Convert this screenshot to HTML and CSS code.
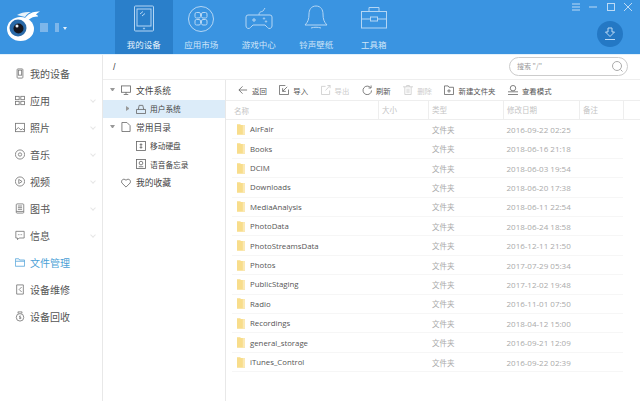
FILE: index.html
```html
<!DOCTYPE html>
<html lang="zh">
<head>
<meta charset="utf-8">
<title>文件管理</title>
<link rel="stylesheet" href="styles.css">
</head>
<body>
<svg class="defs" width="0" height="0" aria-hidden="true">
  <symbol id="folder" viewBox="0 0 9 12"><path d="M0 0h3.500l1 1H9v11H0z" fill="#f8dd8b"/><path d="M6.500 1H9v11H6.500z" fill="#fbe9b4"/></symbol>
</svg>
<div class="app">
  <header class="top">
    <div class="brand">
      <svg class="logo" width="40" height="54" viewBox="0 0 40 54">
        <path d="M25 18c3-4 8-7 15-6.500-2 1-3 2-4 3 1 .5 2 1 2 2-4 0-7 1-9.500 3.500z" fill="#fff"/>
        <path d="M17 15c4-2.500 9-3.500 14-3-2.500 1-4.500 2.500-6 5z" fill="#e9f3fb"/>
        <ellipse cx="20.500" cy="29" rx="13.500" ry="12" fill="#fff"/>
        <circle cx="18" cy="28" r="8.500" fill="#2a6aa8"/>
        <circle cx="18.500" cy="28.500" r="5" fill="#14161f"/>
        <circle cx="17" cy="26" r="1.500" fill="#eef4fa"/>
      </svg>
      <span class="blur-a"></span><span class="blur-b"></span><span class="caret"></span>
    </div>
    <nav class="tabs">
      <a class="tab active">
        <svg width="24" height="28" viewBox="0 0 24 28" class="ic"><rect x="2.500" y="1" width="19" height="25" rx="1"/><rect x="5" y="4" width="14" height="17"/><path d="M8 9l3-2.500M10 11l3-2.500"/><circle cx="12" cy="23.500" r=".6"/></svg>
        <span>我的设备</span></a>
      <a class="tab">
        <svg width="28" height="28" viewBox="0 0 28 28" class="ic"><circle cx="14" cy="14" r="12.500"/><rect x="8" y="7.500" width="5.500" height="5.500" rx="1.500"/><rect x="14.500" y="7.500" width="5.500" height="5.500" rx="1.500"/><rect x="8" y="14.500" width="5.500" height="5.500" rx="1.500"/><rect x="14.500" y="14.500" width="5.500" height="5.500" rx="1.500"/></svg>
        <span>应用市场</span></a>
      <a class="tab">
        <svg width="28" height="28" viewBox="0 0 28 28" class="ic"><path d="M3 10h22a2 2 0 0 1 2 2v9a2.500 2.500 0 0 1-4.500 1.500L20 20H8l-2.500 2.500A2.500 2.500 0 0 1 1 21v-9a2 2 0 0 1 2-2z"/><path d="M14 10C14 6 17 7 18 6s1-2 2-3"/><path d="M7 15h4M9 13v4"/><circle cx="19" cy="13.500" r=".7"/><circle cx="21" cy="16.500" r=".7"/></svg>
        <span>游戏中心</span></a>
      <a class="tab">
        <svg width="28" height="28" viewBox="0 0 28 28" class="ic"><path d="M14 1c-5 0-7 4-7 8 0 5-1 8-4 11h22c-3-3-4-6-4-11 0-4-2-8-7-8z"/><path d="M9 23c3-1 7-1 10 0"/></svg>
        <span>铃声壁纸</span></a>
      <a class="tab">
        <svg width="28" height="28" viewBox="0 0 28 28" class="ic"><rect x="1.500" y="6.500" width="25" height="16.500"/><path d="M9 6.500V2.500h10v4M1.500 14h9M17.500 14h9"/><rect x="10.500" y="12" width="7" height="4"/></svg>
        <span>工具箱</span></a>
    </nav>
    <div class="win">
      <svg width="8" height="8" viewBox="0 0 8 8" class="wi"><path d="M0 1h8M0 4h8M0 7h8"/></svg>
      <svg width="8" height="8" viewBox="0 0 8 8" class="wi"><path d="M0 4h8"/></svg>
      <svg width="8" height="8" viewBox="0 0 8 8" class="wi"><rect x=".5" y=".5" width="7" height="7"/></svg>
      <svg width="8" height="8" viewBox="0 0 8 8" class="wi"><path d="M0 0l8 8M8 0L0 8"/></svg>
    </div>
    <div class="dl">
      <svg width="12" height="14" viewBox="0 0 12 14" class="wi"><path d="M4 1h4v4h2.500L6 9.500 1.500 5H4zM1 12.500h10"/></svg>
    </div>
  </header>
  <div class="body">
    <aside class="side">
      <div class="nav-item"><svg class="si" viewBox="0 0 12 12"><rect x="2.500" y=".5" width="7" height="11" rx="1"/><rect x="4" y="2" width="4" height="6"/></svg><span class="nl">我的设备</span></div>
      <div class="nav-item"><svg class="si" viewBox="0 0 12 12"><rect x=".5" y="1" width="4.500" height="4"/><rect x="7" y="1" width="4.500" height="4"/><rect x=".5" y="7" width="4.500" height="4"/><rect x="7" y="7" width="4.500" height="4"/></svg><span class="nl">应用</span><i class="chev"></i></div>
      <div class="nav-item"><svg class="si" viewBox="0 0 12 12"><rect x=".5" y="1" width="11" height="10"/><path d="M1 9l3-3 3 3 2-1.500 2 1.500"/></svg><span class="nl">照片</span><i class="chev"></i></div>
      <div class="nav-item"><svg class="si" viewBox="0 0 12 12"><circle cx="6" cy="6" r="5.500"/><circle cx="6" cy="6" r="2"/></svg><span class="nl">音乐</span><i class="chev"></i></div>
      <div class="nav-item"><svg class="si" viewBox="0 0 12 12"><circle cx="6" cy="6" r="5.500"/><path d="M4.500 3.500l4 2.500-4 2.500z"/></svg><span class="nl">视频</span><i class="chev"></i></div>
      <div class="nav-item"><svg class="si" viewBox="0 0 12 12"><rect x="1.500" y=".5" width="9" height="11" rx="1"/><path d="M3.500 3h5M3.500 5h5M3.500 7h5M1.500 9.500h9"/></svg><span class="nl">图书</span><i class="chev"></i></div>
      <div class="nav-item"><svg class="si" viewBox="0 0 12 12"><path d="M1 1h10v8H5l-2 2V9H1z"/><path d="M3.500 5h1M5.500 5h1M7.500 5h1"/></svg><span class="nl">信息</span><i class="chev"></i></div>
      <div class="nav-item on"><svg class="si" viewBox="0 0 12 12"><path d="M.5 1.500h4l1 1.500h6v7.500H.5zM.5 4.500h11"/></svg><span class="nl">文件管理</span></div>
      <div class="nav-item"><svg class="si" viewBox="0 0 12 12"><path d="M2 .5h8v11H2z"/><path d="M8 3L5 6l3 3"/></svg><span class="nl">设备维修</span></div>
      <div class="nav-item"><svg class="si" viewBox="0 0 12 12"><circle cx="6" cy="7" r="4.500"/><path d="M4 2.500L3.500.5h5L8 2.500M7 5.500H5.500v1.500H7v1.500H5"/></svg><span class="nl">设备回收</span></div>
    </aside>
    <main class="main">
      <div class="pathbar">
        <span class="path">/</span>
        <div class="search"><span>搜索 "/"</span><svg width="11" height="11" viewBox="0 0 11 11" class="gi"><circle cx="5" cy="5" r="4.500"/><path d="M8.500 8.500l2 2"/></svg></div>
      </div>
      <div class="panes">
        <div class="tree">
          <div class="tr"><i class="tri down"></i><svg class="ti" viewBox="0 0 11 11"><rect x=".5" y="1" width="10" height="7"/><path d="M5.500 8v2M3 10.500h5"/></svg><span>文件系统</span></div>
          <div class="tr sel lv"><i class="tri right"></i><svg class="ti" viewBox="0 0 11 11"><path d="M.5 6h10v4.500H.5zM2.500 6l1-4.500h4l1 4.500"/></svg><span>用户系统</span></div>
          <div class="tr"><i class="tri down"></i><svg class="ti" viewBox="0 0 11 11"><path d="M1 .5h5.500l3.500 3.500v6.500H1z"/></svg><span>常用目录</span></div>
          <div class="tr lv"><i class="tri none"></i><svg class="ti" viewBox="0 0 11 11"><rect x=".5" y=".5" width="10" height="10"/><path d="M5.500 2.500v6M4 4h3M4 7h3"/></svg><span>移动硬盘</span></div>
          <div class="tr lv"><i class="tri none"></i><svg class="ti" viewBox="0 0 11 11"><rect x=".5" y=".5" width="10" height="10"/><circle cx="5.500" cy="4.500" r="2"/><path d="M3 8.500h5"/></svg><span>语音备忘录</span></div>
          <div class="tr"><i class="tri none"></i><svg class="ti" viewBox="0 0 11 11"><path d="M5.500 10L1 5.500C-.5 3 2.500-.5 5.500 2.500 8.500-.5 11.500 3 10 5.500z"/></svg><span>我的收藏</span></div>
        </div>
        <div class="files">
          <div class="toolbar">
            <span class="tb"><svg class="bi" viewBox="0 0 11 11"><path d="M10 5.500H1M5 1.500l-4 4 4 4"/></svg>返回</span>
            <span class="tb"><svg class="bi" viewBox="0 0 11 11"><path d="M7 .5H.5v10h10V5M9 2L4 7M4 3.500V7h3.500"/></svg>导入</span>
            <span class="tb dis"><svg class="bi" viewBox="0 0 11 11"><path d="M5 1.500H.5v9h9V6M5 6l5-5.500M7 .5h3v3"/></svg>导出</span>
            <span class="tb"><svg class="bi" viewBox="0 0 11 11"><path d="M9.500 3A4.700 4.700 0 1 0 10.500 6M10 .5V3.300H7.200"/></svg>刷新</span>
            <span class="tb dis"><svg class="bi" viewBox="0 0 11 11"><path d="M0 2h11M2 2v8.500h7V2M4 2V.5h3V2M4.500 4v5M6.500 4v5"/></svg>删除</span>
            <span class="tb"><svg class="bi" viewBox="0 0 11 11"><path d="M.5 1h4l1 1.500h5v8h-10zM5.500 4.500v4M3.500 6.500h4"/></svg>新建文件夹</span>
            <span class="tb"><svg class="bi" viewBox="0 0 11 11"><circle cx="5.500" cy="3.500" r="3"/><path d="M0 7.500h11M0 10.500h11"/></svg>查看模式</span>
          </div>
          <div class="thead"><span>名称</span><span class="bl">大小</span><span class="bl">类型</span><span class="bl">修改日期</span><span class="bl">备注</span><span class="bl"></span></div>
          <div class="rows">
            <div class="row"><span class="nm"><svg class="fi"><use href="#folder"/></svg>AirFair</span><span class="ty">文件夹</span><span class="dt">2016-09-22 02:25</span></div>
            <div class="row"><span class="nm"><svg class="fi"><use href="#folder"/></svg>Books</span><span class="ty">文件夹</span><span class="dt">2018-06-16 21:18</span></div>
            <div class="row"><span class="nm"><svg class="fi"><use href="#folder"/></svg>DCIM</span><span class="ty">文件夹</span><span class="dt">2018-06-03 19:54</span></div>
            <div class="row"><span class="nm"><svg class="fi"><use href="#folder"/></svg>Downloads</span><span class="ty">文件夹</span><span class="dt">2018-06-20 17:38</span></div>
            <div class="row"><span class="nm"><svg class="fi"><use href="#folder"/></svg>MediaAnalysis</span><span class="ty">文件夹</span><span class="dt">2018-06-11 22:54</span></div>
            <div class="row"><span class="nm"><svg class="fi"><use href="#folder"/></svg>PhotoData</span><span class="ty">文件夹</span><span class="dt">2018-06-24 18:58</span></div>
            <div class="row"><span class="nm"><svg class="fi"><use href="#folder"/></svg>PhotoStreamsData</span><span class="ty">文件夹</span><span class="dt">2016-12-11 21:50</span></div>
            <div class="row"><span class="nm"><svg class="fi"><use href="#folder"/></svg>Photos</span><span class="ty">文件夹</span><span class="dt">2017-07-29 05:34</span></div>
            <div class="row"><span class="nm"><svg class="fi"><use href="#folder"/></svg>PublicStaging</span><span class="ty">文件夹</span><span class="dt">2017-12-02 19:48</span></div>
            <div class="row"><span class="nm"><svg class="fi"><use href="#folder"/></svg>Radio</span><span class="ty">文件夹</span><span class="dt">2016-11-01 07:50</span></div>
            <div class="row"><span class="nm"><svg class="fi"><use href="#folder"/></svg>Recordings</span><span class="ty">文件夹</span><span class="dt">2018-04-12 15:00</span></div>
            <div class="row"><span class="nm"><svg class="fi"><use href="#folder"/></svg>general_storage</span><span class="ty">文件夹</span><span class="dt">2016-09-21 12:09</span></div>
            <div class="row"><span class="nm"><svg class="fi"><use href="#folder"/></svg>iTunes_Control</span><span class="ty">文件夹</span><span class="dt">2016-09-22 02:39</span></div>
          </div>
        </div>
      </div>
    </main>
  </div>
</div>
</body>
</html>
```

FILE: styles.css
```css
* { box-sizing: border-box; }
html, body { margin: 0; padding: 0; }
body {
  width: 640px;
  height: 401px;
  overflow: hidden;
  background: #fff;
  font-family: "Noto Sans CJK SC", "Liberation Sans", sans-serif;
  color: #555;
}
.defs { position: absolute; }
.app { width: 640px; height: 401px; display: flex; flex-direction: column; }
.top {
  height: 54px;
  flex: none;
  background: #3a94e1;
  display: flex;
  position: relative;
}
.brand { width: 115px; display: flex; align-items: center; }
.logo { flex: none; }
.blur-a { width: 8px; height: 9px; background: #7db6ea; }
.blur-b { width: 4px; height: 9px; background: #7db6ea; margin-left: 7px; }
.caret { width: 0; height: 0; border: 2.500px solid transparent; border-top: 3px solid #e4f0fb; margin: 4px 0 0 4px; }
.tabs { display: flex; }
.tab {
  width: 57.500px;
  height: 54px;
  display: flex;
  flex-direction: column;
  align-items: center;
  padding-top: 5px;
  color: #cfe5f8;
  font-size: 8.500px;
  line-height: 12px;
}
.tab svg { height: 28px; margin-bottom: 5px; flex: none; }
.tab.active { background: #2a7fca; color: #e6f2fc; }
.ic { fill: none; stroke: #b4d6f4; stroke-width: 1; }
.win {
  position: absolute;
  top: 3px;
  right: 8px;
  display: flex;
  gap: 9.500px;
}
.wi { fill: none; stroke: #bcdaf5; stroke-width: 1; flex: none; }
.dl {
  position: absolute;
  left: 597px;
  top: 21px;
  width: 26px;
  height: 26px;
  border-radius: 50%;
  background: #2478c4;
  display: flex;
  align-items: center;
  justify-content: center;
}
.body { flex: 1; display: flex; min-height: 0; border-top: 1px solid #e3f1fb; }
.side { width: 103px; flex: none; border-right: 1px solid #e8e8e8; padding-top: 5px; }
.nav-item {
  height: 27px;
  display: flex;
  align-items: center;
  padding-left: 15px;
  padding-right: 5px;
  font-size: 10px;
  color: #555;
  gap: 5px;
}
.nl { flex: 1; }
.si { width: 10px; height: 11px; fill: none; stroke: #777; stroke-width: 1; flex: none; }
.nav-item.on { color: #4b9fd6; }
.nav-item.on .si { stroke: #5aa7db; }
.chev { width: 4px; height: 4px; border-right: 1px solid #e6e6e6; border-bottom: 1px solid #e6e6e6; transform: rotate(45deg); margin-top: -2px; margin-right: 2px; }
.main { flex: 1; min-width: 0; display: flex; flex-direction: column; }
.pathbar {
  height: 25px;
  flex: none;
  display: flex;
  align-items: center;
  justify-content: space-between;
  border-bottom: 1px solid #eee;
  padding: 0 12px 0 10px;
}
.path { font-size: 9px; font-family: "Liberation Sans", sans-serif; color: #444; }
.search {
  width: 119px;
  height: 19px;
  border: 1px solid #ccc;
  border-radius: 10px;
  display: flex;
  align-items: center;
  justify-content: space-between;
  padding: 0 4px 0 7px;
  font-size: 7px;
  color: #999;
  margin-top: -2px;
}
.gi { fill: none; stroke: #aaa; stroke-width: 1; }
.panes { flex: 1; display: flex; min-height: 0; }
.tree { width: 123px; flex: none; border-right: 1px solid #e8e8e8; padding-top: 1px; }
.tr {
  height: 18.500px;
  display: flex;
  align-items: center;
  padding-left: 7px;
  font-size: 8.750px;
  color: #444;
  gap: 5px;
}
.tri + .ti { margin-left: 1px; }
.tr.lv { padding-left: 23px; font-size: 7.700px; gap: 4px; }
.tr.sel { background: #dcecf9; }
.tri { width: 5px; height: 5px; flex: none; }
.tri.down { border: 2.500px solid transparent; border-top: 3.500px solid #999; border-bottom: 0; }
.tri.right { border: 2.500px solid transparent; border-left: 3.500px solid #999; border-right: 0; }
.ti { width: 10px; height: 10px; fill: none; stroke: #666; stroke-width: .9; flex: none; }
.files { flex: 1; min-width: 0; display: flex; flex-direction: column; }
.toolbar {
  height: 21px;
  flex: none;
  display: flex;
  align-items: center;
  padding-left: 12px;
  gap: 12.500px;
  font-size: 7.400px;
  color: #555;
  border-bottom: 1px solid #eee;
}
.tb { display: flex; align-items: center; gap: 4px; }
.tb.dis { color: #ccc; }
.bi { width: 10px; height: 10px; fill: none; stroke: #666; stroke-width: .9; flex: none; }
.dis .bi { stroke: #ccc; }
.thead {
  height: 19px;
  flex: none;
  display: grid;
  grid-template-columns: 144px 50px 75px 76px 44px 1fr;
  align-items: center;
  font-size: 7.500px;
  color: #c4c4c4;
  border-bottom: 1px solid #eee;
  padding-left: 8px;
}
.thead .bl { border-left: 1px solid #eee; padding-left: 3px; height: 18px; line-height: 18px; }
.rows { display: flex; flex-direction: column; }
.row {
  height: 19.420px;
  flex: none;
  margin: 0 17px 0 6px;
  padding-left: 5px;
  display: grid;
  grid-template-columns: 195px 74.500px 1fr;
  align-items: center;
  border-bottom: 1px solid #f6f6f6;
}
.nm { display: flex; align-items: center; gap: 5px; font-family: "Open Sans", "Liberation Sans", sans-serif; font-size: 7.800px; color: #555; }
.fi { width: 8px; height: 11px; flex: none; }
.ty { font-size: 7.500px; color: #aaa; }
.dt { font-family: "Open Sans", "Liberation Sans", sans-serif; font-size: 8px; color: #aaa; }
```
